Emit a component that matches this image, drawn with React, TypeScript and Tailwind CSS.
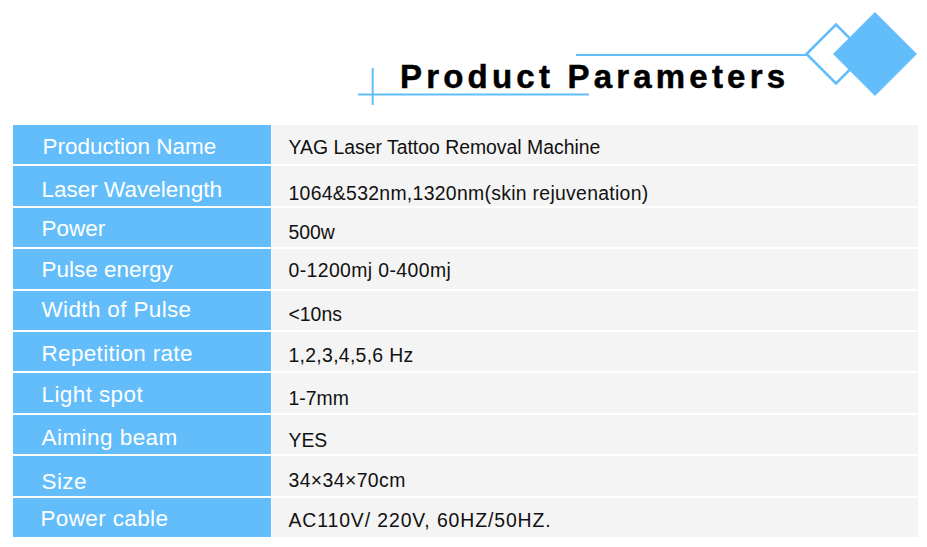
const BLUE = "#62bdfa";

const rows = [
  { label: "Production Name", value: "YAG Laser Tattoo Removal Machine", lc: "translate-y-[2px] pl-[1px]", vc: "translate-y-[3px]" },
  { label: "Laser Wavelength", value: "1064&532nm,1320nm(skin rejuvenation)", lc: "translate-y-[4px]", vc: "translate-y-[7px] tracking-[0.3px]" },
  { label: "Power", value: "500w", lc: "translate-y-[2px]", vc: "translate-y-[5px]" },
  { label: "Pulse energy", value: "0-1200mj 0-400mj", lc: "translate-y-[1px]", vc: "translate-y-[2px] tracking-[0.4px]" },
  { label: "Width of Pulse", value: "<10ns", lc: "translate-y-[0px] tracking-[0.35px]", vc: "translate-y-[4px]" },
  { label: "Repetition rate", value: "1,2,3,4,5,6 Hz", lc: "translate-y-[1.5px] tracking-[0.33px]", vc: "translate-y-[4px] tracking-[0.3px]" },
  { label: "Light spot", value: "1-7mm", lc: "translate-y-[2px] tracking-[0.4px]", vc: "translate-y-[5px]" },
  { label: "Aiming beam", value: "YES", lc: "translate-y-[4px] tracking-[0.45px]", vc: "translate-y-[6px]" },
  { label: "Size", value: "34×34×70cm", lc: "translate-y-[6px] tracking-[0.4px]", vc: "translate-y-[5px] tracking-[0.4px]" },
  { label: "Power cable", value: "AC110V/ 220V, 60HZ/50HZ.", lc: "translate-y-[1.5px] -ml-[1px] tracking-[0.36px]", vc: "translate-y-[3px] tracking-[0.9px]" },
];

function HeaderArt() {
  // decorative lines and diamonds behind the title
  return (
    <svg className="absolute inset-0" width="927" height="125" viewBox="0 0 927 125">
      <line x1="372.7" y1="68" x2="372.7" y2="105" stroke={BLUE} strokeWidth="2" />
      <line x1="358" y1="94.5" x2="589" y2="94.5" stroke={BLUE} strokeWidth="2" />
      <line x1="576" y1="55" x2="807" y2="55" stroke={BLUE} strokeWidth="2" />
      <polygon points="806.5,54 836,24.5 865.5,54 836,83.5" fill="white" stroke={BLUE} strokeWidth="2.5" />
      <polygon points="833,54 875,12 917,54 875,96" fill={BLUE} />
    </svg>
  );
}

export default function App() {
  return (
    <div className="w-[927px] h-[547px] bg-white overflow-hidden" style={{ fontFamily: '"Liberation Sans", Arial, sans-serif' }}>
      <div className="relative h-[125px]">
        <HeaderArt />
        <h1 className="relative pl-[400px] pt-[60px] text-[33px] leading-[33px] font-bold tracking-[4.2px] text-black [-webkit-text-stroke:0.5px_#000]">
          Product Parameters
        </h1>
      </div>

      <div className="ml-[13px] w-[905px] flex flex-col gap-[2px]">
        {rows.map((r) => (
          <div key={r.label} className="flex h-[39.4px] gap-[1px]">
            <div className="w-[258px] bg-[#62bdfa] flex items-center pl-[28.5px]">
              <span className={"text-[22.5px] leading-[22px] text-white " + r.lc}>{r.label}</span>
            </div>
            <div className="flex-1 bg-[#f4f4f4] flex items-center pl-[16.5px]">
              <span className={"text-[19.4px] leading-[19px] text-[#111] " + r.vc}>{r.value}</span>
            </div>
          </div>
        ))}
      </div>
    </div>
  );
}
